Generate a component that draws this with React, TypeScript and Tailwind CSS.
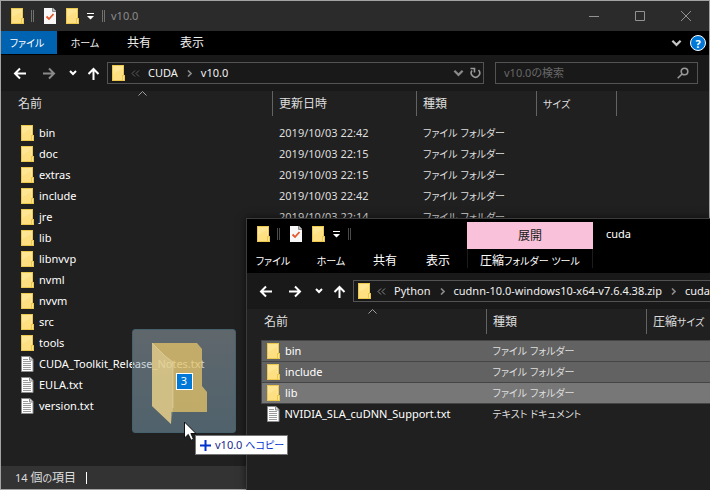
import type { ReactNode } from "react";

/* Kana are set smaller than kanji, as in a condensed Japanese UI face. */
function Txt({ children }: { children: string }) {
  const runs = children.match(/[\u3040-\u30ff]+|[\u4e00-\u9fff]+|[^\u3040-\u30ff\u4e00-\u9fff]+/g) ?? [];
  return (
    <>
      {runs.map((run, i) => {
        if (/[\u4e00-\u9fff]/.test(run)) return <span key={i} className="text-[12px]">{run}</span>;
        if (/[\u3040-\u30ff]/.test(run)) return <span key={i} className="text-[10px]">{run}</span>;
        return <span key={i}>{run}</span>;
      })}
    </>
  );
}

function FolderIcon() {
  return (
    <svg width="13" height="16" viewBox="0 0 13 16" className="shrink-0" aria-hidden="true">
      <path d="M0 0H12V10H13V16H0Z" fill="#edc84f" />
      <path d="M1 1H11V10H10V15H1Z" fill="#ffe694" />
      <path d="M1 15V9L10 4V15Z" fill="#fddc78" opacity=".6" />
      <path d="M11 11H12V15H11Z" fill="#ffe694" />
    </svg>
  );
}

function FileIcon() {
  return (
    <svg width="13" height="16" viewBox="0 0 13 16" className="shrink-0" aria-hidden="true">
      <path d="M.5.5H9L12 3.5V15.5H.5Z" fill="#fff" stroke="#8c8c8c" />
      <path d="M8.5 1V4H12" fill="#ddd" stroke="#8c8c8c" />
      <path d="M2 3.5H7M2 5.5H10M2 7.5H10M2 9.5H10M2 11.5H10M2 13.5H10" stroke="#9b9b9b" />
    </svg>
  );
}

function CheckDocIcon() {
  return (
    <svg width="12" height="16" viewBox="0 0 12 16" className="shrink-0" aria-hidden="true">
      <path d="M0 0H9L12 3V16H0Z" fill="#f7f7f7" />
      <path d="M8.5 0V3.5H12" fill="#bbb" stroke="#8c8c8c" />
      <path d="M2.5 8.5L5 11L9.5 6" fill="none" stroke="#e4572a" strokeWidth="1.8" />
    </svg>
  );
}

function Grip({ dim }: { dim?: boolean }) {
  return <span className={`h-3 w-[3px] shrink-0 border-x ${dim ? "border-[#4a4a4a]" : "border-[#707070]"}`} />;
}

function Arrow({ kind, color }: { kind: "back" | "forward" | "up"; color: string }) {
  const paths = {
    back: "M13 6.5H2M7 1.5L2 6.5L7 11.5",
    forward: "M0 6.5H11M6 1.5L11 6.5L6 11.5",
    up: "M6.5 13V2M1.5 7L6.5 2L11.5 7",
  };
  return (
    <svg width="13" height="13" viewBox="0 0 13 13" fill="none" stroke={color} strokeWidth="2" aria-hidden="true">
      <path d={paths[kind]} />
    </svg>
  );
}

function Chevron({ color, size = 8 }: { color: string; size?: number }) {
  return (
    <svg width={size} height={size} viewBox="0 0 8 8" fill="none" stroke={color} strokeWidth={size > 8 ? 1.6 : 2} aria-hidden="true">
      <path d="M1 2L4 5L7 2" />
    </svg>
  );
}

function Crumb({ double, color }: { double?: boolean; color: string }) {
  return double ? (
    <svg width="9" height="7" viewBox="0 0 9 7" fill="none" stroke={color} className="shrink-0" aria-hidden="true">
      <path d="M4 .5L1 3.5L4 6.5M8 .5L5 3.5L8 6.5" />
    </svg>
  ) : (
    <svg width="5" height="7" viewBox="0 0 5 7" fill="none" stroke={color} strokeWidth="1.6" className="shrink-0" aria-hidden="true">
      <path d="M1 .5L4 3.5L1 6.5" />
    </svg>
  );
}

function QuickAccess({ dim }: { dim?: boolean }) {
  return (
    <div className="flex shrink-0 items-center pl-[10px]">
      <FolderIcon />
      <span className="w-[7px]" />
      <Grip dim={dim} />
      <button aria-label="プロパティ" className="ml-[10px]"><CheckDocIcon /></button>
      <button aria-label="新しいフォルダー" className="ml-[10px]"><FolderIcon /></button>
      <button aria-label="クイック アクセスのカスタマイズ" className="mx-2">
        <svg width="7" height="7" viewBox="0 0 7 7" fill="#fff" aria-hidden="true"><path d="M0 0H7V1H0ZM0 3H7L3.5 6.5Z" /></svg>
      </button>
      <Grip dim={dim} />
    </div>
  );
}

function Tabs({ active }: { active?: boolean }) {
  return (
    <>
      <button className={`h-[23px] w-14 shrink-0 pr-1 text-white ${active ? "bg-[#0063b1]" : ""}`}><Txt>ファイル</Txt></button>
      <button className="w-14 shrink-0"><Txt>ホーム</Txt></button>
      <button className="w-[52px] shrink-0"><Txt>共有</Txt></button>
      <button className="w-[54px] shrink-0"><Txt>表示</Txt></button>
    </>
  );
}

function NavBar({ forward, children }: { forward: string; children: ReactNode }) {
  return (
    <div className="flex h-9 items-center bg-[#191919]">
      <button aria-label="戻る" className="ml-3"><Arrow kind="back" color="#fff" /></button>
      <button aria-label="進む" className="ml-[17px]"><Arrow kind="forward" color={forward} /></button>
      <button aria-label="最近表示した場所" className="ml-[13px]"><Chevron color="#fff" /></button>
      <button aria-label="上へ" className="ml-[10px] mr-[7px]"><Arrow kind="up" color="#fff" /></button>
      {children}
    </div>
  );
}

function SortMark({ className }: { className: string }) {
  return (
    <svg width="9" height="5" viewBox="0 0 9 5" fill="none" stroke="#a0a0a0" className={`absolute top-0 ${className}`} aria-hidden="true">
      <path d="M.5 4.5L4.5.5L8.5 4.5" />
    </svg>
  );
}

const th = "h-[25px] border-r border-[#636363] text-left font-normal text-[#dedede]";

const folder = "ファイル フォルダー";

/* Rows whose details lie behind the archive window carry a name only. */
const entries = [
  { name: "bin", date: "2019/10/03 22:42", kind: folder },
  { name: "doc", date: "2019/10/03 22:15", kind: folder },
  { name: "extras", date: "2019/10/03 22:15", kind: folder },
  { name: "include", date: "2019/10/03 22:42", kind: folder },
  { name: "jre", date: "2019/10/03 22:14", kind: folder },
  { name: "lib" },
  { name: "libnvvp" },
  { name: "nvml" },
  { name: "nvvm" },
  { name: "src" },
  { name: "tools" },
  { name: "CUDA_Toolkit_Release_Notes.txt" },
  { name: "EULA.txt" },
  { name: "version.txt" },
];

const archive = [
  { name: "bin", kind: folder, row: "border border-r-0 border-[#454545] bg-[#626262]" },
  { name: "include", kind: folder, row: "border border-r-0 border-[#454545] bg-[#626262]" },
  { name: "lib", kind: folder, row: "border border-r-0 border-[#454545] bg-[#777777]" },
  { name: "NVIDIA_SLA_cuDNN_Support.txt", kind: "テキスト ドキュメント", row: "" },
];

function Name({ children }: { children: string }) {
  return (
    <span className="flex items-center gap-[5px] text-white">
      {children.endsWith(".txt") ? <FileIcon /> : <FolderIcon />}
      <span>{children}</span>
    </span>
  );
}

function MainWindow() {
  return (
    <section className="flex h-full flex-col border border-[#a3a3a3] bg-[#202020]">
      <header className="flex h-[30px] shrink-0 items-center bg-[#2b2b2b]">
        <QuickAccess />
        <h1 className="ml-[6px] flex-1 text-[#8c8c8c]">v10.0</h1>
        <button aria-label="最小化" className="flex w-[46px] justify-center">
          <svg width="10" height="10" stroke="#929292" aria-hidden="true"><path d="M0 5.5H10" /></svg>
        </button>
        <button aria-label="最大化" className="flex w-[46px] justify-center">
          <svg width="10" height="10" fill="none" stroke="#929292" aria-hidden="true"><path d="M.5.5H9.5V9.5H.5Z" /></svg>
        </button>
        <button aria-label="閉じる" className="flex w-[46px] justify-center">
          <svg width="10" height="10" stroke="#929292" aria-hidden="true"><path d="M0 0L10 10M10 0L0 10" /></svg>
        </button>
      </header>
      <nav className="flex h-6 shrink-0 items-start bg-black leading-[23px]">
        <Tabs active />
        <button aria-label="リボンの展開" className="ml-auto mt-[7px]"><Chevron color="#c8c8c8" size={11} /></button>
        <button aria-label="ヘルプ" className="ml-2 mr-[3px] mt-1">
          <span className="flex size-4 items-center justify-center rounded-full border border-white bg-[#0078d7] text-[11px] font-bold text-white">?</span>
        </button>
      </nav>
      <NavBar forward="#8a8a8a">
        <div className="flex h-[22px] flex-1 items-center border border-[#535353] pl-1 text-[#f0f0f0]">
          <FolderIcon />
          <span className="ml-[6px] mr-2 flex"><Crumb double color="#5c5c5c" /></span>
          <button>CUDA</button>
          <span className="mx-[9px]"><Crumb color="#8a8a8a" /></span>
          <button>v10.0</button>
          <button aria-label="履歴" className="ml-auto"><Chevron color="#8a8a8a" size={11} /></button>
          <button aria-label="最新の情報に更新" className="ml-[6px] mr-[2px]">
            <svg width="11" height="12" viewBox="0 0 11 12" fill="none" stroke="#999" strokeWidth="1.6" aria-hidden="true">
              <path d="M8.5 3A4.2 4.2 0 1 1 2 3.5M.5 1.5H4.5V5.5" />
            </svg>
          </button>
        </div>
        <div className="ml-[11px] mr-[11px] flex h-[22px] w-[203px] items-center border border-[#535353] px-2">
          <input aria-label="検索" placeholder="v10.0の検索" className="min-w-0 flex-1 bg-transparent outline-none placeholder:text-[#686868]" />
          <svg width="12" height="12" viewBox="0 0 12 12" fill="none" stroke="#999" strokeWidth="1.6" aria-hidden="true">
            <circle cx="7.5" cy="4.5" r="3.3" /><path d="M5 7L.7 11.3" />
          </svg>
        </div>
      </NavBar>
      <div className="relative min-h-0 flex-1 overflow-hidden">
        <SortMark className="left-[137px]" />
        <table className="w-full table-fixed border-separate border-spacing-0">
          <colgroup><col className="w-[272px]" /><col className="w-36" /><col className="w-[120px]" /><col className="w-20" /><col /></colgroup>
          <thead>
            <tr>
              <th className={`${th} pl-[17px]`}><Txt>名前</Txt></th>
              <th className={`${th} pl-[6px]`}><Txt>更新日時</Txt></th>
              <th className={`${th} pl-[6px]`}><Txt>種類</Txt></th>
              <th className={`${th} pl-[6px]`}><Txt>サイズ</Txt></th>
              <th />
            </tr>
            <tr className="h-[6px]" />
          </thead>
          <tbody>
            {entries.map(({ name, date, kind }) => (
              <tr key={name} className="h-[21px] text-[#dedede]">
                <td className="pl-5"><Name>{name}</Name></td>
                <td className="pl-[6px]">{date}</td>
                <td className="pl-[6px]">{kind && <Txt>{kind}</Txt>}</td>
                <td />
                <td />
              </tr>
            ))}
          </tbody>
        </table>
      </div>
      <footer className="flex h-[23px] shrink-0 items-center bg-[#333] pl-[14px] text-[#dedede]">
        <span><Txt>14 個の項目</Txt></span>
        <span className="ml-[10px] h-3 w-px bg-white" />
      </footer>
    </section>
  );
}

function ArchiveWindow() {
  return (
    <section className="absolute bottom-0 left-[246px] right-0 top-[218px] flex flex-col overflow-hidden border-l border-t border-[#3c3c3c] bg-[#202020] shadow-[0_0_8px_rgba(0,0,0,0.6)]">
      <header className="flex h-[54px] shrink-0 bg-black">
        <div>
          <div className="flex h-[30px] items-center"><QuickAccess dim /></div>
          <nav className="flex h-6 items-start leading-[23px] text-white"><Tabs /></nav>
        </div>
        <div className="ml-[2px] w-[126px] shrink-0 pt-[3px] text-center">
          <div className="h-[27px] bg-[#fac1da] leading-[27px] text-[#202020]"><Txt>展開</Txt></div>
          <button className="h-[19px] w-full border-x border-[#1c1c1c] leading-[23px] text-white"><Txt>圧縮フォルダー ツール</Txt></button>
        </div>
        <h2 className="ml-[13px] leading-[30px] text-white">cuda</h2>
      </header>
      <NavBar forward="#fff">
        <div className="flex h-[22px] min-w-0 flex-1 items-center overflow-hidden whitespace-nowrap border border-r-0 border-[#535353] pl-1 text-[#f0f0f0]">
          <FolderIcon />
          <span className="ml-[6px] mr-2"><Crumb double color="#8a8a8a" /></span>
          <button>Python</button>
          <span className="mx-[9px]"><Crumb color="#8a8a8a" /></span>
          <button>cudnn-10.0-windows10-x64-v7.6.4.38.zip</button>
          <span className="mx-[9px]"><Crumb color="#8a8a8a" /></span>
          <button>cuda</button>
        </div>
      </NavBar>
      <div className="relative flex-1">
        <SortMark className="left-[121px]" />
        <table className="w-full table-fixed border-separate border-spacing-0">
          <colgroup><col className="w-[240px]" /><col className="w-40" /><col /></colgroup>
          <thead>
            <tr>
              <th className={`${th} pl-[17px]`}><Txt>名前</Txt></th>
              <th className={`${th} pl-[6px]`}><Txt>種類</Txt></th>
              <th className="pl-[6px] text-left font-normal text-[#dedede]"><Txt>圧縮サイズ</Txt></th>
            </tr>
          </thead>
        </table>
        <table className="mt-[6px] ml-[14px] w-[calc(100%-14px)] table-fixed border-collapse">
          <colgroup><col className="w-[226px]" /><col className="w-40" /><col /></colgroup>
          <tbody>
            {archive.map(({ name, kind, row }) => (
              <tr key={name} className={`h-[21px] text-[#dedede] ${row}`}>
                <td className="pl-[5px]"><Name>{name}</Name></td>
                <td className="pl-[5px]"><Txt>{kind}</Txt></td>
                <td />
              </tr>
            ))}
          </tbody>
        </table>
      </div>
    </section>
  );
}

function DragPreview() {
  return (
    <>
      <div className="absolute left-[132px] top-[329px] flex size-[104px] items-center justify-center rounded-[3px] border border-[#46606c] bg-linear-to-b from-[#9eaeb8]/50 to-[#80a4b8]/50">
        <svg width="104" height="104" viewBox="0 0 104 104" className="absolute -left-px -top-px" aria-hidden="true">
          <path d="M20 14H65L70 20V57L75 63V83H39V95L20 77Z" fill="#ebc868" opacity=".72" />
          <path d="M20 14L33 27L41 33V79L39 95L20 77Z" fill="#e6dcae" opacity=".4" />
          <path d="M20 14L33 27L41 33V79" fill="none" stroke="#eee0ac" opacity=".5" />
        </svg>
        <span className="relative flex size-[17px] items-center justify-center border border-white bg-[#0078d7] text-white">3</span>
      </div>
      <div role="status" className="absolute left-[195px] top-[435px] flex h-5 items-center border border-[#767676] bg-white pl-1 pr-[3px] text-[#1a2a8c]">
        <svg width="11" height="11" stroke="#0033cc" strokeWidth="2" aria-hidden="true"><path d="M5.5 0V11M0 5.5H11" /></svg>
        <span className="ml-1 whitespace-nowrap">v10.0 <span className="text-[#0033cc]"><Txt>へコピー</Txt></span></span>
      </div>
      <svg width="13" height="20" viewBox="0 0 13 20" className="absolute left-[184px] top-[421px]" aria-hidden="true">
        <path d="M.5 1V17L4.3 13.4L7 19.3L9.5 18.2L6.9 12.5H12Z" fill="#fff" stroke="#111" />
      </svg>
    </>
  );
}

export default function App() {
  return (
    <main className="relative h-screen w-full overflow-hidden bg-[#202020] font-['Noto_Sans','Noto_Sans_CJK_JP',sans-serif] text-[11px] leading-4 text-[#f0f0f0] [font-feature-settings:'palt']">
      <MainWindow />
      <ArchiveWindow />
      <DragPreview />
    </main>
  );
}
